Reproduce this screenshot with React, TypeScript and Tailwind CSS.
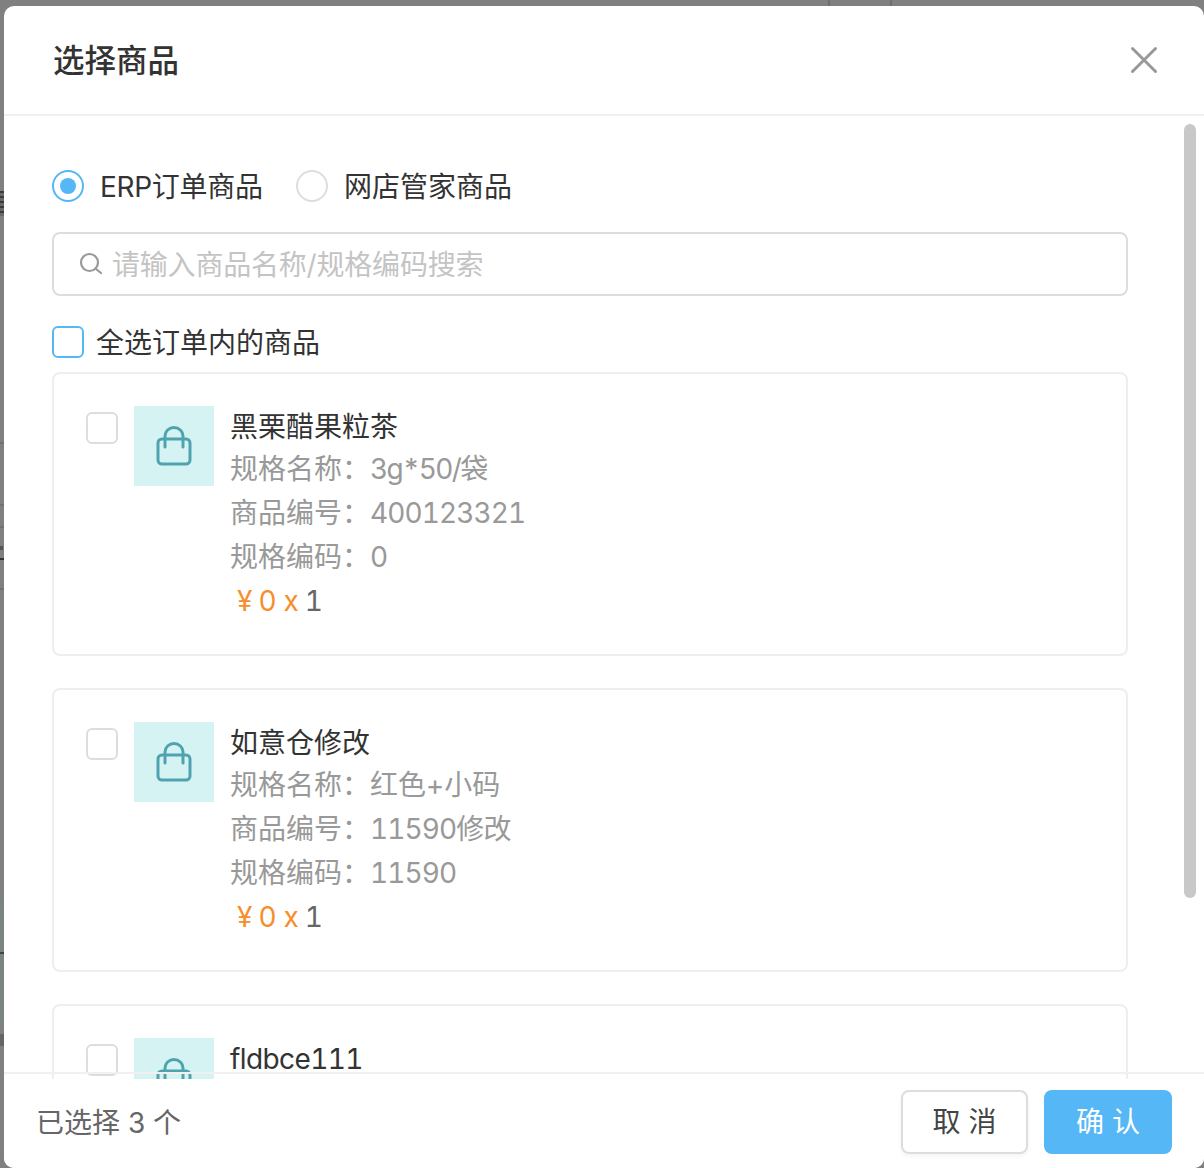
const FONT = "font-['Inter','Noto_Sans_CJK_SC',sans-serif]"

const products = [
  { name: "黑栗醋果粒茶", nameClass: "", spec: "3g*50/袋", specClass: "tracking-[-1.6px]", code: "400123321", sku: "0" },
  { name: "如意仓修改", nameClass: "", spec: "红色+小码", specClass: "", code: "11590修改", sku: "11590" },
  { name: "fldbce111", nameClass: "tracking-[-0.6px]", spec: "默认", specClass: "", code: "fldbce111", sku: "111" },
]

const BagIcon = () => (
  <svg width="36" height="40" viewBox="0 0 36 40" fill="none" stroke="#4fa3af" strokeWidth="3" strokeLinecap="round" strokeLinejoin="round">
    <rect x="2" y="13" width="32" height="25" rx="4" />
    <path d="M9 21V10a9 8.5 0 0 1 18 0v11" />
  </svg>
)

const ProductCard = ({ name, nameClass, spec, specClass, code, sku }: (typeof products)[number]) => (
  <div className="flex h-[284px] w-[1076px] shrink-0 rounded-lg border-2 border-[#eeeeee] pt-[32px] pl-[32px]">
    <span className="mt-[6px] h-[32px] w-[32px] shrink-0 rounded-[6px] border-2 border-[#dddddd]" />
    <div className="ml-[16px] flex h-[80px] w-[80px] shrink-0 items-center justify-center bg-[#d6f3f4]">
      <BagIcon />
    </div>
    <div className="ml-[16px] -mt-[1px] flex flex-col text-[28px] leading-[44px] text-[#999999] tabular-nums">
      <div className={`h-[42px] text-[#333333] ${nameClass}`}>{name}</div>
      <div>
        规格名称：<span className={specClass}>{spec}</span>
      </div>
      <div>
        商品编号：<span className="tracking-[-0.9px]">{code}</span>
      </div>
      <div>
        规格编码：<span className="tracking-[-0.9px]">{sku}</span>
      </div>
      <div className="flex pl-[7px] text-[#f58f2e]">
        <span>¥</span>
        <span className="ml-[6px]">0</span>
        <span className="ml-[7px]">x</span>
        <span className="ml-[6px] text-[#666666]">1</span>
      </div>
    </div>
  </div>
)

export default function App() {
  return (
    <div className={`${FONT} relative h-[1168px] w-[1204px] overflow-hidden bg-[#808080] pt-[6px] pl-[4px]`}>
      {/* page behind the overlay */}
      <div className="absolute top-0 left-[828px] h-[6px] w-[2px] bg-[#6e6e6e]" />
      <div className="absolute top-0 left-[890px] h-[6px] w-[2px] bg-[#6e6e6e]" />
      <div className="absolute top-[191px] left-0 h-[25px] w-[4px] bg-[repeating-linear-gradient(180deg,#3a3a3a_0_2px,#6a6a6a_2px_5px)]" />
      <div className="absolute top-[442px] left-0 h-[2px] w-[4px] bg-[#707070]" />
      <div className="absolute top-[504px] left-0 h-[2px] w-[4px] bg-[#707070]" />
      <div className="absolute top-[526px] left-0 h-[2px] w-[4px] bg-[#707070]" />
      <div className="absolute top-[546px] left-0 h-[4px] w-[3px] bg-[#555555]" />
      <div className="absolute top-[558px] left-0 h-[2px] w-[4px] bg-[#333333]" />
      <div className="absolute top-[588px] left-0 h-[2px] w-[4px] bg-[#707070]" />
      <div className="absolute top-[898px] left-0 h-[128px] w-[4px] bg-[#7a8583]" />
      <div className="absolute top-[952px] left-0 h-[2px] w-[4px] bg-[#444444]" />
      <div className="absolute top-[1034px] left-0 h-[12px] w-[4px] bg-[#666666]" />

      <div className="flex h-[1162px] w-[1200px] flex-col overflow-hidden rounded-[10px] bg-white">
        <header className="flex h-[110px] shrink-0 items-center justify-between border-b-2 border-[#f0f0f0] pr-[46px] pl-[49px]">
          <h1 className="mt-[2px] text-[31.5px] font-medium text-[#333333]">选择商品</h1>
          <svg width="28" height="28" viewBox="0 0 28 28" stroke="#999999" strokeWidth="3" strokeLinecap="round">
            <path d="M2.5 2.5l23 23M25.5 2.5l-23 23" />
          </svg>
        </header>

        <div className="relative min-h-0 flex-1 overflow-hidden pl-[48px]">
          <div className="absolute top-[8px] right-[8px] h-[774px] w-[12px] rounded-full bg-[#c8c8c8]" />

          <div className="mt-[54px] flex h-[32px] items-center text-[28px] text-[#333333]">
            <span className="flex h-[32px] w-[32px] items-center justify-center rounded-full border-2 border-[#55b7f6]">
              <span className="h-[16px] w-[16px] rounded-full bg-[#55b7f6]" />
            </span>
            <span className="ml-[16px] w-[163px] pt-[2px] tracking-[-0.3px]">ERP订单商品</span>
            <span className="ml-[33px] h-[32px] w-[32px] rounded-full border-2 border-[#dddddd]" />
            <span className="ml-[16px] pt-[2px]">网店管家商品</span>
          </div>

          <div className="mt-[30px] flex h-[64px] w-[1076px] items-center rounded-lg border-2 border-[#dddddd] pl-[25px] text-[28px] text-[#c4c4c4]">
            <svg width="24" height="24" viewBox="0 0 24 24" fill="none" stroke="#999999" strokeWidth="2.2" strokeLinecap="round">
              <circle cx="10.5" cy="10.5" r="8.5" />
              <path d="M17 17l5 4" />
            </svg>
            <span className="ml-[9px] pt-[2px] tracking-[-0.2px]">请输入商品名称/规格编码搜索</span>
          </div>

          <div className="mt-[30px] flex h-[32px] items-center text-[28px] text-[#333333]">
            <span className="h-[32px] w-[32px] rounded-[6px] border-2 border-[#55b7f6]" />
            <span className="ml-[12px] pt-[2px]">全选订单内的商品</span>
          </div>

          <div className="mt-[14px] flex flex-col gap-[32px]">
            {products.map((product) => (
              <ProductCard key={product.name} {...product} />
            ))}
          </div>
        </div>

        <footer className="z-10 -mt-[7px] shrink-0 border-t-2 border-[#f0f0f0]">
          <div className="h-[5px]" />
          <div className="flex h-[89px] items-start justify-between bg-white pt-[11px] pr-[32px] pl-[32px]">
            <span className="mt-[17px] text-[28px] leading-[32px] text-[#666666]">已选择 3 个</span>
            <div className="flex gap-[16px]">
              <button className="h-[64px] w-[127px] rounded-lg border-2 border-[#dddddd] bg-white text-[28px] text-[#444444] shadow-[0_2px_4px_rgba(0,0,0,0.05)]">
                取 消
              </button>
              <button className="h-[64px] w-[128px] rounded-lg bg-[#55b7f6] text-[28px] text-white">
                确 认
              </button>
            </div>
          </div>
        </footer>
      </div>
    </div>
  )
}
